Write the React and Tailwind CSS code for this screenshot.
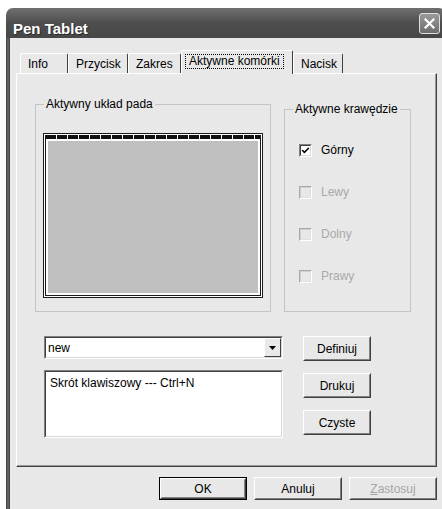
import { Check } from "lucide-react";

const sunken =
  "border border-t-[#808080] border-l-[#808080] border-b-white border-r-white";
const sunkenInner =
  "border border-t-[#404040] border-l-[#404040] border-b-[#d8d8d8] border-r-[#d8d8d8]";

function Button({ children, w = "w-[68px]", h = "h-[25px]", isDefault, disabled }) {
  const face = (
    <div className={`h-full border border-t-white border-l-white border-b-[#404040] border-r-[#404040]`}>
      <div className="h-full flex items-center justify-center border border-t-[#e8e8e8] border-l-[#e8e8e8] border-b-[#808080] border-r-[#808080]">
        <span className={disabled ? "text-[#a6a6a6]" : ""}>{children}</span>
      </div>
    </div>
  );
  return (
    <div className={`${w} ${h} ${isDefault ? "border border-black" : ""} bg-[#e8e8e8]`}>{face}</div>
  );
}

function CheckRow({ label, checked, disabled }) {
  return (
    <div className="flex items-center h-[14px]">
      <div className={`w-[13px] h-[13px] ${disabled ? "border border-t-[#a8a8a8] border-l-[#a8a8a8] border-b-white border-r-white" : sunken}`}>
        <div className={`w-full h-full flex items-center justify-center ${disabled ? "border border-t-[#cfcfcf] border-l-[#cfcfcf] border-b-[#e0e0e0] border-r-[#e0e0e0]" : `${sunkenInner} bg-white`}`}>
          {checked && <Check className="w-[9px] h-[9px]" strokeWidth={4} color="#000" />}
        </div>
      </div>
      <span className={`ml-[9px] ${disabled ? "text-[#a8a8a8]" : ""}`}>{label}</span>
    </div>
  );
}

export default function App() {
  const tabs = [
    { name: "Info", w: "w-[48px]" },
    { name: "Przycisk", w: "w-[60px]" },
    { name: "Zakres", w: "w-[53px]" },
    { name: "Aktywne komórki", w: "w-[112px]", active: true },
    { name: "Nacisk", w: "w-[50px]" },
  ];

  return (
    <div className="w-[442px] h-[509px] overflow-hidden bg-white font-['Liberation_Sans',Arial,sans-serif] text-[12px] leading-[14px] text-black">
      <div className="ml-[6px] mt-[8px] w-[440px]">
        {/* title bar */}
        <div className="h-[30px] rounded-t-[7px] bg-gradient-to-b from-[#707070] via-[#4e4e4e] to-[#474747] flex items-start justify-between">
          <span className="pl-[7px] pt-[12px] text-[15px] leading-[17px] font-bold text-white [text-shadow:1px_1px_0_#2a2a2a]">
            Pen Tablet
          </span>
          <div className="mt-[5px] mr-[6px] w-[21px] h-[21px] rounded-[3px] border border-[#e0e0e0] bg-gradient-to-b from-[#9a9a9a] to-[#6e6e6e] flex items-center justify-center">
            <svg width="11" height="11" viewBox="0 0 11 11">
              <path d="M1.5 1.5 L9.5 9.5 M9.5 1.5 L1.5 9.5" stroke="#fff" strokeWidth="2.2" strokeLinecap="square" />
            </svg>
          </div>
        </div>

        {/* body */}
        <div className="flex h-[471px]">
          <div className="w-[4px] bg-gradient-to-r from-[#3c3c3c] via-[#6c6c6c] to-[#3c3c3c]" />
          <div className="flex-1 bg-[#e8e8e8] pt-[12px] pl-[6px]">
            {/* tabs */}
            <div className="flex items-end h-[23px] pl-[4px]">
              {tabs.map((t) => (
                <div
                  key={t.name}
                  className={`${t.w} ${t.active ? "h-[24px] -mb-px relative z-10 pt-[3px] pl-[3px]" : "h-[20px] pt-[3px] pl-[7px]"} shrink-0 whitespace-nowrap bg-[#e8e8e8] border-t border-l border-t-white border-l-white border-r border-r-[#404040] rounded-t-[2px]`}
                >
                  {t.active ? (
                    <span className="inline-block border border-dotted border-black px-[3px] leading-[13px]">{t.name}</span>
                  ) : (
                    t.name
                  )}
                </div>
              ))}
            </div>

            {/* tab panel */}
            <div className="w-[421px] h-[394px] border border-t-white border-l-white border-r-[#404040] border-b-[#404040] shadow-[inset_-1px_-1px_0_#9a9a9a] pt-[23px] pl-[18px]">
              <div className="flex items-start gap-[13px]">
                <fieldset className="w-[236px] h-[215px] border border-[#c4c4c4]">
                  <legend className="ml-[8px] px-[2px] whitespace-nowrap">Aktywny układ pada</legend>
                  <div className="mt-[22px] ml-[7px] w-[220px] h-[165px] border border-[#1c1c1c] bg-white p-px">
                    <div className="h-full border border-t-0 border-[#1c1c1c] flex flex-col">
                      <div className="h-[4px] bg-[repeating-linear-gradient(90deg,#111_0px,#111_10px,#fff_10px,#fff_11px)]" />
                      <div className="flex-1 border-2 border-white bg-[#c0c0c0]" />
                    </div>
                  </div>
                </fieldset>

                <fieldset className="mt-[5px] w-[127px] h-[210px] border border-[#c4c4c4]">
                  <legend className="ml-[8px] px-[2px] whitespace-nowrap">Aktywne krawędzie</legend>
                  <div className="mt-[27px] ml-[14px] flex flex-col gap-[28px]">
                    <CheckRow label="Górny" checked />
                    <CheckRow label="Lewy" disabled />
                    <CheckRow label="Dolny" disabled />
                    <CheckRow label="Prawy" disabled />
                  </div>
                </fieldset>
              </div>

              {/* shortcut editor */}
              <div className="mt-[24px] ml-[9px] flex gap-[20px]">
                <div className="flex flex-col gap-[11px]">
                  <div className={`w-[239px] h-[23px] ${sunken}`}>
                    <div className={`h-full ${sunkenInner} bg-white flex items-center justify-between`}>
                      <span className="pl-[2px]">new</span>
                      <div className="w-[17px] h-full border border-t-white border-l-white border-b-[#404040] border-r-[#404040] bg-[#e8e8e8] flex items-center justify-center">
                        <svg width="7" height="4" viewBox="0 0 7 4">
                          <path d="M0 0 H7 L3.5 4 Z" fill="#000" />
                        </svg>
                      </div>
                    </div>
                  </div>
                  <div className={`w-[239px] h-[68px] ${sunken}`}>
                    <div className={`h-full ${sunkenInner} bg-white pl-[4px] pt-[4px]`}>
                      Skrót klawiszowy --- Ctrl+N
                    </div>
                  </div>
                </div>
                <div className="flex flex-col gap-[12px]">
                  <Button>Definiuj</Button>
                  <Button>Drukuj</Button>
                  <Button>Czyste</Button>
                </div>
              </div>
            </div>

            {/* dialog buttons */}
            <div className="w-[421px] mt-[10px] flex justify-end gap-[7px]">
              <Button w="w-[88px]" h="h-[23px]" isDefault>OK</Button>
              <Button w="w-[88px]" h="h-[23px]">Anuluj</Button>
              <Button w="w-[88px]" h="h-[23px]" disabled>
                <span className="underline">Z</span>astosuj
              </Button>
            </div>
          </div>
        </div>
      </div>
    </div>
  );
}
